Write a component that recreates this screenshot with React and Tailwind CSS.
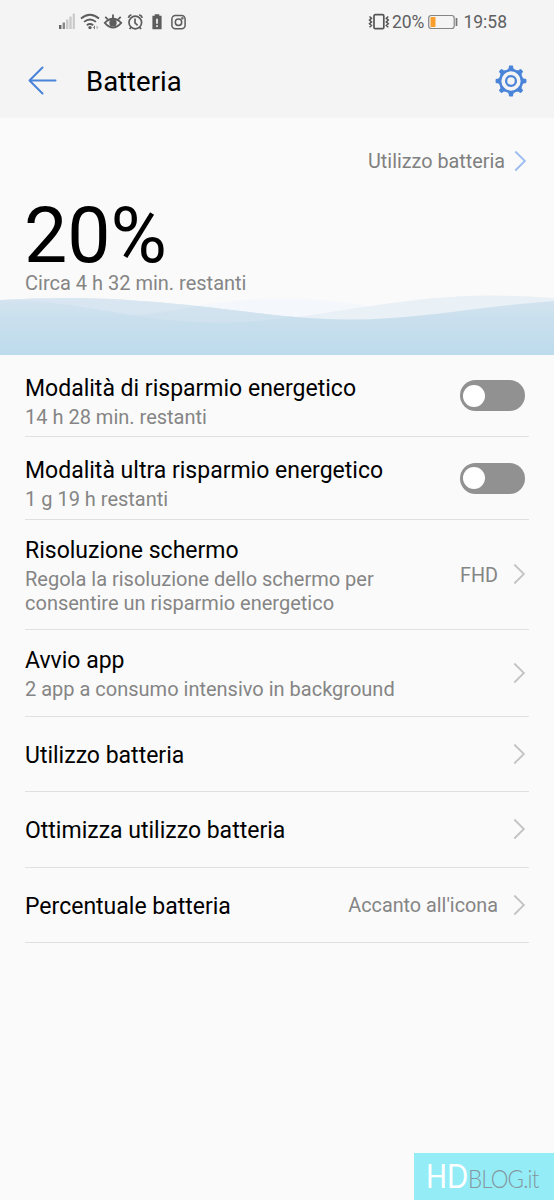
function Chevron({ className = "text-[#c3c3c3]" }) {
  return (
    <svg className={`h-[22px] w-[14px] shrink-0 ${className}`} viewBox="0 0 14 22" fill="none" stroke="currentColor" strokeWidth="1.8">
      <path d="M2.300 1.500 11.900 11 2.300 20.500" />
    </svg>
  );
}

function StatusIcons() {
  return (
    <svg className="h-[24px] w-[132px]" viewBox="0 0 132 24" fill="none" stroke="#5c5c5c">
      <g stroke="none">
        <rect x="1" y="15" width="2.4" height="4" fill="#666" />
        <rect x="4.6" y="12.5" width="2.4" height="6.5" fill="#888" />
        <rect x="8" y="9.5" width="2.4" height="9.5" fill="#c9c9c9" />
        <rect x="11.3" y="6.5" width="2.4" height="12.5" fill="#c9c9c9" />
        <rect x="14.7" y="3.5" width="2.2" height="15.5" fill="#c9c9c9" />
      </g>
      <g strokeWidth="1.8">
        <path d="M23 8.500Q32 1 41 8.500" />
        <path d="M26 11.900Q32 7.100 38 11.900" />
        <path d="M28.800 15.200Q32 12.800 35.200 15.200" />
      </g>
      <circle cx="32" cy="17.600" r="1.700" fill="#5c5c5c" stroke="none" />
      <path d="M37 15.200v4.400l-1.900-2.200Z" fill="#777" stroke="none" />
      <path d="M38.500 15.200v4.400l1.900-2.200Z" fill="#b5b5b5" stroke="none" />
      <g strokeWidth="1.800">
        <path d="M46.800 12.800Q55 4.700 63.200 12.800Q55 22.200 46.800 12.800Z" />
        <circle cx="55" cy="12.900" r="2.800" fill="#5c5c5c" />
        <path d="M55 8.500V4.600M49.800 9.500 47.300 6.800M60.200 9.500 62.700 6.800" />
      </g>
      <g strokeWidth="1.700">
        <circle cx="77.300" cy="12.500" r="6.300" />
        <path d="M77 8.600v4.200l2.600 2.500M70.400 7.800Q70.900 5.400 73.400 4.700M84.200 7.800Q83.700 5.400 81.200 4.700" />
        <path d="m73 17.400-1.500 1.600m10.100-1.600 1.500 1.600" />
      </g>
      <path d="M96.700 4.200h4.600v1.500h2.300V19.200h-9.200V5.700h2.300Z" fill="#5c5c5c" stroke="none" />
      <path d="M99 8.700v5m0 1.500v1.800" stroke="#f4f4f4" strokeWidth="1.700" />
      <g strokeWidth="1.500">
        <rect x="113.900" y="5.500" width="13.200" height="13.200" rx="3.500" />
        <circle cx="120.500" cy="12.200" r="3.200" />
        <circle cx="124.400" cy="8.200" r=".5" />
      </g>
    </svg>
  );
}

function VibrateIcon() {
  return (
    <svg className="h-[18px] w-[22px]" viewBox="0 0 22 18" fill="none" stroke="#555" strokeWidth="1.500">
      <rect x="6" y="1.700" width="9.800" height="14" rx="1.300" strokeWidth="1.700" />
      <path d="m1.500 3.500 2 1.800-2 1.800 2 1.800-2 1.800 2 1.800-2 1.800M20.300 3.500l-2 1.800 2 1.800-2 1.800 2 1.800-2 1.800 2 1.800" />
    </svg>
  );
}

function BatteryIcon() {
  return (
    <svg className="h-[16px] w-[30px]" viewBox="0 0 30 16" fill="none">
      <rect x=".7" y="1.500" width="25.500" height="13" rx="2.500" stroke="#858585" strokeWidth="1.200" />
      <rect x="2.500" y="3" width="5" height="10" rx=".7" fill="#f99d2b" />
      <path d="M28.500 4v8" stroke="#777" strokeWidth="1.700" />
    </svg>
  );
}

function GearIcon() {
  const teeth = [0, 45, 90, 135, 180, 225, 270, 315];
  return (
    <svg className="h-[32px] w-[32px]" viewBox="-16 -16 32 32" fill="none" stroke="#4a84d9">
      <circle r="10.900" strokeWidth="2.500" />
      <circle r="4.900" strokeWidth="2.300" />
      {teeth.map((angle) => (
        <path key={angle} d="M-3.800-11.200-2.200-13V-14.200Q-2.200-15.400-1.200-15.400H1.200Q2.200-15.400 2.200-14.200V-13L3.800-11.200Z" fill="#4a84d9" stroke="none" transform={`rotate(${angle})`} />
      ))}
    </svg>
  );
}

function Waves() {
  return (
    <svg className="block h-[62px] w-full" viewBox="0 293 554 62" preserveAspectRatio="none">
      <defs>
        <linearGradient id="front" gradientUnits="userSpaceOnUse" x1="0" y1="297" x2="0" y2="355">
          <stop offset="0" stopColor="#d5e4f0" />
          <stop offset=".4" stopColor="#c9dfed" />
          <stop offset="1" stopColor="#bddbed" />
        </linearGradient>
        <clipPath id="frontShape">
          <path d="M0 300C50 297.500 90 297 140 301C220 306 280 319.500 350 319.500C420 319.500 480 306 554 301V355H0Z" />
        </clipPath>
      </defs>
      <path d="M80 322C160 316 205 298.500 285 298.500C340 298.500 380 309 440 316V354.500H80Z" fill="#f4f7fb" />
      <path d="M0 300C80 299 130 322.500 220 322.500C310 322.500 390 295.500 490 295.500Q520 295.500 554 298V354.500H0Z" fill="#e9f0f6" />
      <g clipPath="url(#frontShape)">
        <rect x="0" y="293" width="554" height="62" fill="url(#front)" />
        <path d="M0 300C80 299 130 322.500 220 322.500C255 322.500 285 318 310 314V293H0Z" fill="#dce8f2" opacity=".65" />
        <path d="M130 316C180 311 205 303 240 300L320 315C285 319 255 322.500 220 322.500Q170 322.500 130 316Z" fill="#cbdfed" opacity=".4" />
      </g>
    </svg>
  );
}

function Toggle() {
  return (
    <button role="switch" aria-checked="false" className="mr-[4px] flex h-[31px] w-[65px] shrink-0 items-center rounded-full bg-[#919191] px-[3px]">
      <span className="size-[22px] rounded-full bg-white" />
    </button>
  );
}

function Row({ title, children, height, control, value }) {
  const padding = control ? "pt-[11px]" : children ? "pt-[1px]" : "pt-[3px]";
  return (
    <div className={`flex items-center border-b border-[#e0e0e0] ${height}`}>
      <div className={`min-w-0 flex-1 ${padding}`}>
        <div className="whitespace-nowrap text-[23px] leading-[30px] text-black">{title}</div>
        {children && <div className="mt-[1px] whitespace-nowrap text-[20px] leading-[24px] text-[#858585]">{children}</div>}
      </div>
      {value && <span className="mr-[14px] whitespace-nowrap pt-[2px] text-[19.800px] text-[#858585]">{value}</span>}
      {control || <Chevron className="mr-[3px] -mt-[1px] text-[#c3c3c3]" />}
    </div>
  );
}

export default function App() {
  return (
    <div className="flex h-[1200px] w-[554px] flex-col overflow-hidden bg-[#fafafa] font-['Roboto',sans-serif]">
      <header className="h-[118px] shrink-0 bg-[#f4f4f4]">
        <div className="flex h-[44px] items-center pr-[47px] pl-[58px]">
          <StatusIcons />
          <div className="ml-auto flex items-center text-[17.500px] text-[#606060]">
            <VibrateIcon />
            <span className="ml-[2px]">20%</span>
            <span className="ml-[4px]"><BatteryIcon /></span>
            <span className="ml-[5px]">19:58</span>
          </div>
        </div>
        <div className="flex h-[74px] items-center pr-[27px] pb-[1px] pl-[28px]">
          <svg className="h-[30px] w-[30px]" viewBox="0 0 30 30" fill="none" stroke="#4a84d9" strokeWidth="2" strokeLinecap="round" strokeLinejoin="round">
            <path d="M27.500 14.500H1.500M14.500 1.500 1.500 14.500l13 13" />
          </svg>
          <h1 className="ml-[28px] pt-[2px] text-[27.500px]">Batteria</h1>
          <span className="ml-auto"><GearIcon /></span>
        </div>
      </header>

      <section className="flex h-[237px] shrink-0 flex-col">
        <div className="mt-[32px] flex h-[24px] items-center justify-end gap-[8px] pr-[27px]">
          <span className="text-[19.800px] text-[#808080]">Utilizzo batteria</span>
          <Chevron className="-mt-[2px] text-[#9bbcf0]" />
        </div>
        <div className="mt-[25px] pl-[24px] text-[77px] leading-[74px] text-black">20%</div>
        <div className="-mt-[2px] pl-[25px] text-[20px] leading-[24px] text-[#858585]">Circa 4 h 32 min. restanti</div>
        <div className="-mt-[2px]"><Waves /></div>
      </section>

      <main className="px-[25px]">
        <Row title="Modalità di risparmio energetico" height="h-[82px]" control={<Toggle />}>14 h 28 min. restanti</Row>
        <Row title="Modalità ultra risparmio energetico" height="h-[83px]" control={<Toggle />}>1 g 19 h restanti</Row>
        <Row title="Risoluzione schermo" height="h-[110px]" value="FHD">
          Regola la risoluzione dello schermo per<br />consentire un risparmio energetico
        </Row>
        <Row title="Avvio app" height="h-[87px]">2 app a consumo intensivo in background</Row>
        <Row title="Utilizzo batteria" height="h-[75px]" />
        <Row title="Ottimizza utilizzo batteria" height="h-[76px]" />
        <Row title="Percentuale batteria" height="h-[75px]" value="Accanto all'icona" />
      </main>

      <footer className="mt-auto ml-auto flex h-[47px] w-[140px] shrink-0 items-baseline bg-[#94edf6] pl-[12px] font-['Lato',sans-serif] leading-[45px]">
        <span className="w-[42px] origin-left scale-x-[.86] text-[32px] text-white">HD</span>
        <span className="origin-left scale-x-[.86] text-[26px] font-light tracking-[-1px] text-[#84979e]">BLOG.it</span>
      </footer>
    </div>
  );
}
